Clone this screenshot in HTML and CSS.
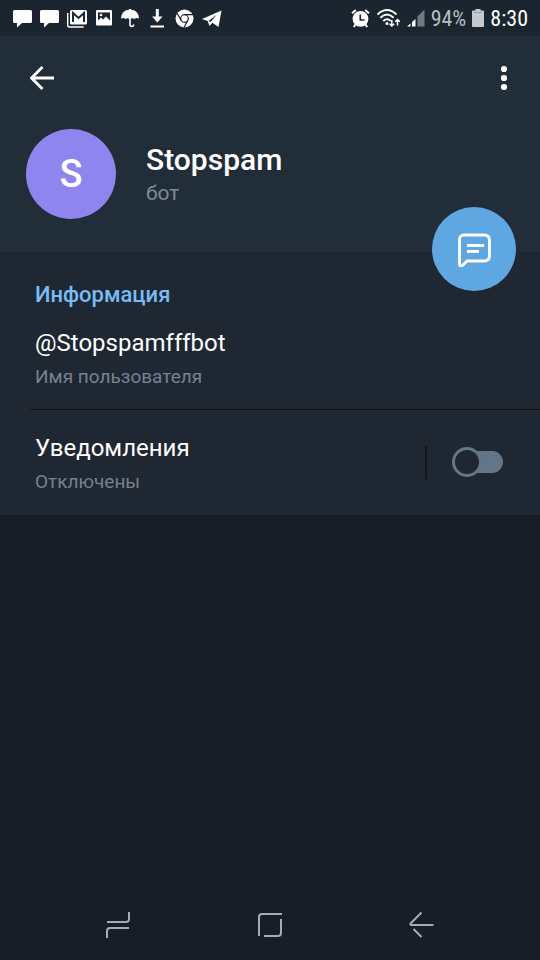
FILE: index.html
```html
<!DOCTYPE html>
<html lang="ru">
<head>
<meta charset="utf-8">
<meta name="viewport" content="width=device-width, initial-scale=1">
<title>Stopspam</title>
<link rel="stylesheet" href="styles.css">
</head>
<body>
<div class="status">
  <div class="status-left">
    <svg class="status-icon" viewBox="0 0 20 20"><path fill="#fff" d="M1.500 1h16q1.500 0 1.500 1.500v10q0 1.500-1.500 1.500H9L4 18.500V14H1.500Q0 14 0 12.500v-10Q0 1 1.500 1z"/></svg>
    <svg class="status-icon" viewBox="0 0 20 20"><path fill="#fff" d="M1.500 1h16q1.500 0 1.500 1.500v10q0 1.500-1.500 1.500H9L4 18.500V14H1.500Q0 14 0 12.500v-10Q0 1 1.500 1z"/></svg>
    <svg class="status-icon" viewBox="0 0 20 20"><path d="M.7 4v12q0 2 2 2h14" fill="none" stroke="#fff" stroke-width="1.400"/><rect x="3" y="1" width="17" height="14.500" rx="1.500" fill="#fff"/><path d="M6 13V4l5.500 5L17 4v9" fill="none" stroke="#1b252f" stroke-width="2"/></svg>
    <svg class="status-icon" viewBox="0 0 20 20"><rect x="2" y="1" width="16" height="15.500" rx="1" fill="#fff"/><path fill="#1b252f" d="M4 3.500h12v8l-4-4-3 3-2-2-3 3z"/><circle cx="7" cy="6" r="1.300" fill="#fff"/></svg>
    <svg class="status-icon" viewBox="0 0 20 20"><path fill="#fff" d="M0 10Q0 1.500 8 .8V0h2v.8q8 .7 8 9.200-2-2-4.500 0-2-1.500-4.500 0-2.500-1.500-4.500 0Q2 8 0 10z"/><path d="M9 9v6.500q0 2 1.800 2t1.800-2" fill="none" stroke="#fff" stroke-width="1.600"/></svg>
    <svg class="status-icon" viewBox="0 0 20 20"><path fill="#fff" d="M7.800 0h3v7.500h3.700l-5.200 6-5.200-6h3.700zM2.500 16.500h13.500v2H2.500z"/></svg>
    <svg class="status-icon" viewBox="0 0 20 20"><circle cx="9.500" cy="9.500" r="9" fill="#fff"/><g fill="none" stroke="#1b252f" stroke-width="1.200"><circle cx="9.500" cy="9.500" r="3.800"/><path d="M9.500 5.700H18M6.200 11.400 2 4.300M12.800 11.400 9 18.500"/></g></svg>
    <svg class="status-icon" viewBox="0 0 20 20"><path fill="#fff" d="M0 10 19.500 1.500 16.500 18l-6.200-4.200L7.500 17l-1.800-5z"/><path d="M6.500 12 15 5.500 8.500 13" fill="#1b252f"/></svg>
  </div>
  <div class="status-right">
    <svg class="alarm" viewBox="0 0 20 20"><circle cx="9.500" cy="9.800" r="7.900" fill="#fff"/><path d="M1 4.200 4.800 1M18 4.200 14.200 1M4.500 15.500l-1.700 2.500M14.500 15.500l1.700 2.500" stroke="#fff" stroke-width="2" fill="none"/><path d="M9.300 5.500V11h4.200" stroke="#1b252f" stroke-width="1.600" fill="none"/></svg>
    <svg class="wifi" viewBox="0 0 24 20"><g fill="none" stroke="#fff" stroke-width="1.900"><path d="M.5 5.500q9.500-9 19 0M3.300 8.800q6.700-6.400 13.400 0M6.300 12q3.700-3.500 7.400 0"/></g><circle cx="10" cy="14.500" r="1.500" fill="#fff"/><path d="M14.800 11v6m-2.300-2.300 2.300 2.300 2.300-2.300M20.500 16.500v-6m-2.300 2.300 2.300-2.300 2.300 2.300" fill="none" stroke="#fff" stroke-width="1.500"/></svg>
    <svg class="signal" viewBox="0 0 18 20"><path fill="#fff" d="M0 17.500 3.500 14.500v3zM5 17.500v-4.500L8.500 10v7.500z"/><path fill="#717a83" d="M10.500 17.500V7.500L17.500.5v17z"/></svg>
    <span class="charge">94%</span>
    <svg class="battery" viewBox="0 0 12 20"><path fill="#c5c8cc" d="M3.500 0h5v1.500H11q1 0 1 1V17q0 1-1 1H1q-1 0-1-1V2.500q0-1 1-1h2.500z"/><path d="M2 3.500h8" stroke="#989da3"/></svg>
    <time class="clock">8:30</time>
  </div>
</div>

<header class="header">
  <div class="toolbar">
    <button class="icon-button" type="button" aria-label="Назад"><svg width="24" height="24" viewBox="0 0 24 24"><path d="M24 12H2M12.500 1 1.500 12l11 11" fill="none" stroke="#fff" stroke-width="2.800"/></svg></button>
    <button class="icon-button" type="button" aria-label="Меню"><svg width="24" height="24" viewBox="0 0 24 24"><g fill="#fff"><circle cx="12" cy="3" r="3.100"/><circle cx="12" cy="12" r="3.100"/><circle cx="12" cy="21" r="3.100"/></g></svg></button>
  </div>
  <div class="profile">
    <div class="avatar">S</div>
    <div>
      <h1 class="name">Stopspam</h1>
      <p class="kind">бот</p>
    </div>
  </div>
  <button class="message" type="button" aria-label="Написать"><svg width="36" height="36" viewBox="0 0 36 36"><g fill="none" stroke="#fff" stroke-width="2.800" stroke-linejoin="round"><path d="M8 4h20q5.500 0 5.500 5.500v15q0 5.500-5.500 5.500H11l-4.200 4.300q-3.300 2-3.300-1.800v-24Q3.500 4 8 4z"/><path d="M11 14.500h17M11 20.500h12"/></g></svg></button>
</header>

<main class="info">
  <h2 class="section-title">Информация</h2>
  <div class="row">
    <p class="value">@Stopspamfffbot</p>
    <p class="caption">Имя пользователя</p>
  </div>
  <div class="row row-toggle">
    <label class="toggle-label" for="notify">
      <span class="value">Уведомления</span>
      <span class="caption">Отключены</span>
    </label>
    <div class="toggle-box"><input class="switch" id="notify" type="checkbox" role="switch"></div>
  </div>
</main>

<nav class="navbar">
  <button class="nav-button" type="button" aria-label="Недавние"><svg width="28" height="28" viewBox="0 0 28 28"><path d="M3 12h19q3 0 3-3V2M3 28v-7q0-3 3-3h19" fill="none" stroke="#a5adb6" stroke-width="2"/></svg></button>
  <button class="nav-button" type="button" aria-label="Домой"><svg width="28" height="28" viewBox="0 0 28 28"><path d="M26 4H6Q3 4 3 7v19M8 26h14q3 0 3-3V9" fill="none" stroke="#a5adb6" stroke-width="2"/></svg></button>
  <button class="nav-button" type="button" aria-label="Назад"><svg width="28" height="28" viewBox="0 0 28 28"><path d="M13.500 2.500 2.500 13.500q-.5 1.500 1 1.500h22M5.500 19l8 8" fill="none" stroke="#a5adb6" stroke-width="2"/></svg></button>
</nav>
</body>
</html>
```
FILE: styles.css
```css
* {
  box-sizing: border-box;
}

body {
  display: flex;
  flex-direction: column;
  min-height: 100vh;
  margin: 0;
  background: #171e26;
  color: #fff;
  font-family: Roboto, sans-serif;
}

h1,
h2,
p {
  margin: 0;
}

svg {
  display: block;
}

button {
  display: flex;
  align-items: center;
  justify-content: center;
  padding: 0;
  border: 0;
  background: none;
}

.status {
  display: flex;
  align-items: center;
  justify-content: space-between;
  height: 36px;
  padding: 2px 12px 0 13px;
  background: #1b252f;
}

.status-left {
  display: flex;
  gap: 7px;
}

.status-icon,
.alarm {
  width: 20px;
  height: 20px;
}

.status-right {
  display: flex;
  align-items: center;
  gap: 6px;
  font-family: "Roboto Condensed", Roboto, sans-serif;
  font-size: 22px;
  line-height: 34px;
}

.wifi {
  width: 24px;
  height: 20px;
}

.signal {
  width: 18px;
  height: 20px;
}

.battery {
  width: 12px;
  height: 20px;
}

.charge {
  color: #b8bdc2;
}

.header {
  position: relative;
  height: 216px;
  background: #222d3a;
}

.toolbar {
  display: flex;
  justify-content: space-between;
  padding: 18px 12px;
}

.icon-button {
  width: 48px;
  height: 48px;
}

.icon-button:first-child {
  width: 60px;
}

.profile {
  display: flex;
  align-items: center;
  gap: 30px;
  padding: 9px 26px;
}

.avatar {
  width: 90px;
  height: 90px;
  border-radius: 50%;
  background: #8f85ee;
  font-size: 38px;
  font-weight: 500;
  line-height: 90px;
  text-align: center;
}

.name {
  padding-top: 2px;
  font-size: 30px;
  font-weight: 500;
  line-height: 36px;
}

.kind {
  color: #7d8b99;
  font-size: 21px;
  line-height: 30px;
}

.message {
  position: absolute;
  right: 24px;
  bottom: -39px;
  width: 84px;
  height: 84px;
  border-radius: 50%;
  background: #5fa7e0;
}

.info {
  padding-left: 30px;
  border-top: 2px solid #1b252f;
  background: #1e2732;
}

.section-title {
  padding: 25px 5px 14px;
  color: #76bdf8;
  font-size: 22px;
  font-weight: 500;
  line-height: 32px;
}

.row {
  padding: 0 5px 16px;
}

.row-toggle {
  display: flex;
  align-items: center;
  justify-content: space-between;
  padding: 20px 36px 17px 5px;
  border-top: 1px solid #0d141b;
}

.value,
.caption {
  display: block;
}

.value {
  font-size: 24px;
  line-height: 36px;
}

.caption {
  color: #75828f;
  font-size: 19px;
  line-height: 32px;
}

.toggle-box {
  display: flex;
  align-items: center;
  height: 33px;
  margin-bottom: 4px;
  padding-left: 25px;
  border-left: 2px solid #0f161d;
}

.switch {
  position: relative;
  width: 52px;
  height: 30px;
  margin: 0;
  appearance: none;
}

.switch::before {
  position: absolute;
  top: 4px;
  right: 1px;
  width: 38px;
  height: 22px;
  border-radius: 11px;
  background: #627687;
  content: "";
}

.switch::after {
  position: absolute;
  top: 0;
  left: 0;
  width: 30px;
  height: 30px;
  border: 3px solid #627687;
  border-radius: 50%;
  background: #1e2732;
  box-sizing: border-box;
  content: "";
}

.switch:checked::after {
  left: 22px;
}

.navbar {
  display: flex;
  justify-content: space-around;
  margin-top: auto;
  padding: 0 42px;
}

.nav-button {
  width: 72px;
  height: 72px;
}
```
